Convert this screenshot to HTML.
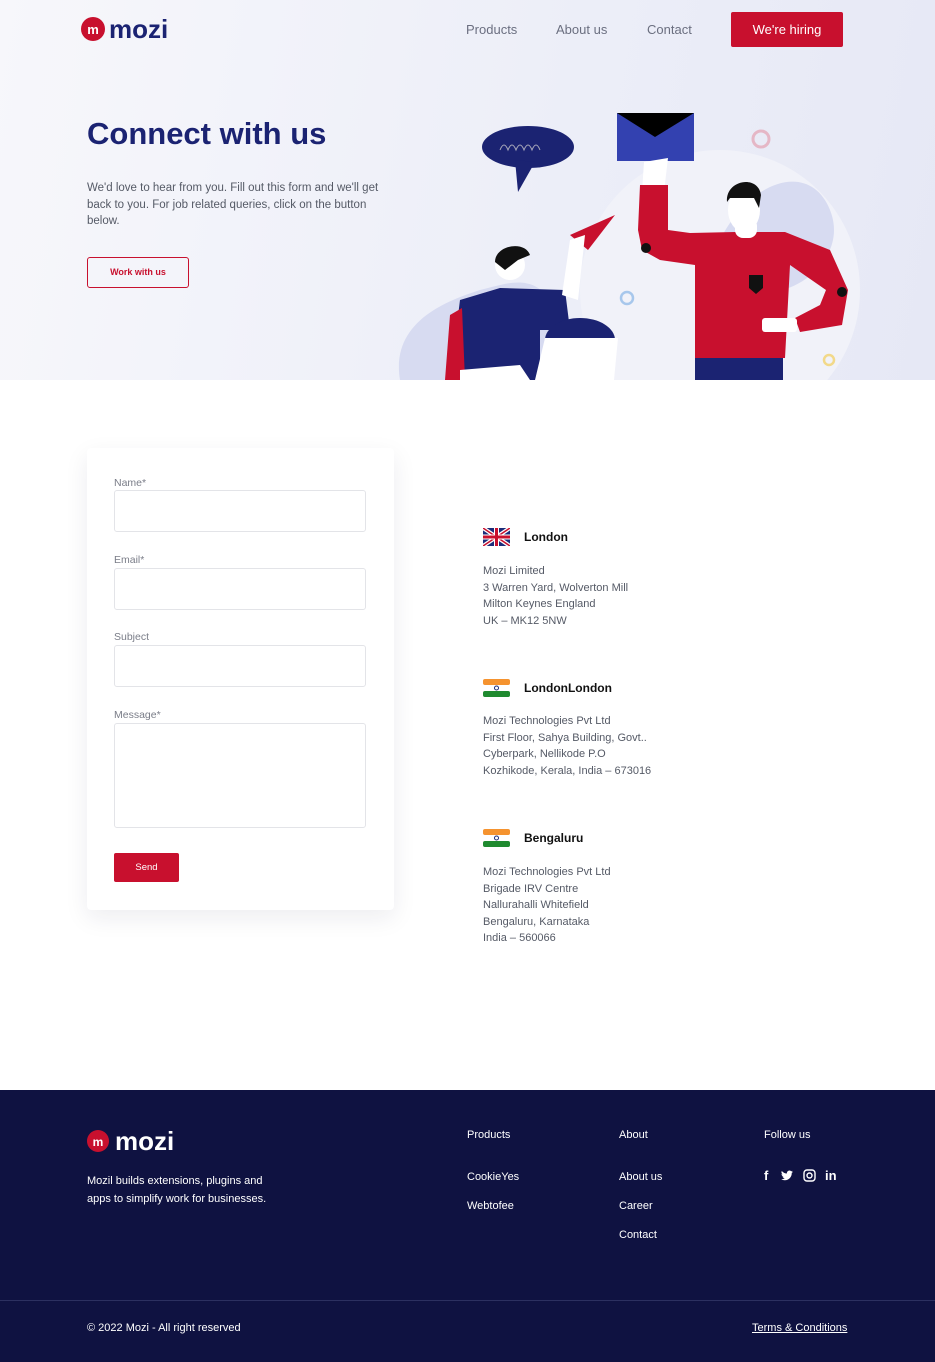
<!DOCTYPE html>
<html><head><meta charset="utf-8"><style>
*{margin:0;padding:0;box-sizing:border-box}
body{width:935px;height:1362px;font-family:"Liberation Sans",sans-serif;background:#fff;position:relative;overflow:hidden;color:#333}
.hero{position:absolute;left:0;top:0;width:935px;height:380px;background:linear-gradient(100deg,#f7f7fb 0%,#eceef8 60%,#e6e8f5 100%)}
.abs{position:absolute}
.nav a{position:absolute;top:22px;font-size:13px;color:#6b6f80;text-decoration:none}
.lbl{position:absolute;font-size:10.5px;color:#7a7d88}
.inp{position:absolute;left:114px;width:252px;border:1px solid #e3e4e8;border-radius:3px;background:#fff}
.addr{position:absolute;left:483px;font-size:11px;line-height:16.5px;color:#555a66}
.city{position:absolute;left:524px;font-size:12px;font-weight:bold;color:#111}
.foot{position:absolute;left:0;top:1090px;width:935px;height:272px;background:#0f1241;color:#fff}
.foot .t{position:absolute;font-size:11px;color:#fff}
</style></head><body>
<div class="hero">
<svg class="abs" style="left:80px;top:14px" width="100" height="30"><circle cx="13" cy="15" r="12" fill="#c8102e"/><text x="13" y="20" font-size="13" font-weight="bold" fill="#fff" text-anchor="middle" font-family="Liberation Sans">m</text><text x="29" y="24" font-size="26" font-weight="bold" fill="#1b2372" font-family="Liberation Sans">mozi</text></svg>
<div class="nav"><a style="left:466px">Products</a><a style="left:556px">About us</a><a style="left:647px">Contact</a></div>
<div class="abs" style="left:731px;top:12px;width:112px;height:35px;background:#c8102e;border-radius:2px;color:#fff;font-size:13px;text-align:center;line-height:35px">We're hiring</div>
<div class="abs" style="left:87px;top:116px;font-size:31px;font-weight:bold;color:#1b2372">Connect with us</div>
<div class="abs" style="left:87px;top:180px;width:305px;font-size:11.5px;line-height:16.5px;color:#555a66">We'd love to hear from you. Fill out this form and we'll get back to you. For job related queries, click on the button below.</div>
<div class="abs" style="left:87px;top:257px;width:102px;height:31px;border:1px solid #c8102e;border-radius:3px;color:#c8102e;font-size:9px;font-weight:bold;text-align:center;line-height:29px">Work with us</div>
<svg class="abs" style="left:390px;top:100px" width="470" height="280">
<circle cx="330" cy="190" r="140" fill="#f1f2f9"/>
<path d="M10 280 C0 220 60 200 90 190 C130 180 150 170 180 230 L220 280Z" fill="#d7dbf1"/>
<path d="M330 140 C360 80 420 60 440 110 C460 160 400 200 370 190 C340 185 320 170 330 140Z" fill="#d7dbf1"/>
<ellipse cx="138" cy="47" rx="46" ry="21" fill="#1b2372"/><path d="M125 60 L128 92 L145 62Z" fill="#1b2372"/>
<path d="M110 50 q4-10 8 0 q4-10 8 0 q4-10 8 0 q4-10 8 0 q4-10 8 0" stroke="#aab" fill="none"/>
<rect x="227" y="13" width="77" height="48" fill="#3341b0"/><path d="M227 13 L265 37 L304 13Z" fill="#000"/>
<circle cx="371" cy="39" r="8" fill="none" stroke="#e5b7c6" stroke-width="3"/>
<circle cx="237" cy="198" r="6" fill="none" stroke="#a7c7ec" stroke-width="2.5"/>
<circle cx="439" cy="260" r="5" fill="none" stroke="#f2d98a" stroke-width="2.5"/>
<path d="M180 135 L225 115 L198 150Z" fill="#c8102e"/>
<path d="M254 62 L278 58 L274 92 L252 92Z" fill="#fff"/>
<path d="M250 85 L278 85 L278 130 L300 133 L345 132 L395 132 L440 150 L458 190 L452 225 L410 232 L405 218 L430 205 L436 190 L400 165 L395 258 L305 258 L305 165 L270 160 L252 150 L248 130Z" fill="#c8102e"/>
<circle cx="256" cy="148" r="5" fill="#111"/><circle cx="452" cy="192" r="5" fill="#111"/>
<path d="M359 175 L373 175 L373 188 L366 194 L359 188Z" fill="#111"/>
<rect x="372" y="218" width="35" height="14" rx="3" fill="#fff"/>
<rect x="345" y="118" width="22" height="20" rx="8" fill="#fff"/>
<ellipse cx="354" cy="110" rx="16" ry="22" fill="#fff"/>
<path d="M337 102 C335 80 368 74 371 95 L369 108 L364 98 L340 98Z" fill="#111"/>
<rect x="305" y="258" width="88" height="22" fill="#1b2372"/>
<path d="M60 280 L70 200 L110 188 L175 190 L180 230 L150 230 L150 280Z" fill="#1b2372"/>
<path d="M55 280 L60 215 L72 208 L75 280Z" fill="#c8102e"/>
<circle cx="120" cy="165" r="15" fill="#fff"/><path d="M105 162 C105 145 135 140 140 155 L128 160 L115 170Z" fill="#111"/>
<path d="M172 195 L180 140 L195 135 L188 200Z" fill="#fff"/>
<ellipse cx="190" cy="240" rx="35" ry="22" fill="#1b2372"/>
<path d="M155 238 L228 238 L224 280 L145 280Z" fill="#fff"/>
<path d="M70 270 L130 265 L140 280 L70 280Z" fill="#fff"/>
</svg>
</div>

<div class="abs" style="left:87px;top:448px;width:307px;height:462px;background:#fff;border-radius:4px;box-shadow:0 8px 24px rgba(20,25,60,0.08)"></div>
<div class="lbl" style="left:114px;top:477px">Name*</div><div class="inp" style="top:490px;height:42px"></div>
<div class="lbl" style="left:114px;top:554px">Email*</div><div class="inp" style="top:568px;height:42px"></div>
<div class="lbl" style="left:114px;top:631px">Subject</div><div class="inp" style="top:645px;height:42px"></div>
<div class="lbl" style="left:114px;top:709px">Message*</div><div class="inp" style="top:723px;height:105px"></div>
<div class="abs" style="left:114px;top:853px;width:65px;height:29px;background:#c8102e;border-radius:2px;color:#fff;font-size:9.5px;text-align:center;line-height:29px">Send</div>

<svg class="abs" style="left:483px;top:528px" width="27" height="18"><rect width="27" height="18" fill="#1b2c7a"/><path d="M0 0L27 18M27 0L0 18" stroke="#fff" stroke-width="4"/><path d="M0 0L27 18M27 0L0 18" stroke="#c8102e" stroke-width="1.5"/><path d="M13.5 0V18M0 9H27" stroke="#fff" stroke-width="5"/><path d="M13.5 0V18M0 9H27" stroke="#c8102e" stroke-width="3"/></svg>
<div class="city" style="top:530px">London</div>
<div class="addr" style="top:563px">Mozi Limited<br>3 Warren Yard, Wolverton Mill<br>Milton Keynes England<br>UK – MK12 5NW</div>
<svg class="abs" style="left:483px;top:679px" width="27" height="18"><rect width="27" height="6" rx="2" fill="#f5932f"/><rect y="6" width="27" height="6" fill="#fff"/><rect y="12" width="27" height="6" rx="2" fill="#1f8a2f"/><circle cx="13.5" cy="9" r="2" fill="none" stroke="#1b2c7a"/></svg>
<div class="city" style="top:681px">LondonLondon</div>
<div class="addr" style="top:713px">Mozi Technologies Pvt Ltd<br>First Floor, Sahya Building, Govt..<br>Cyberpark, Nellikode P.O<br>Kozhikode, Kerala, India – 673016</div>
<svg class="abs" style="left:483px;top:829px" width="27" height="18"><rect width="27" height="6" rx="2" fill="#f5932f"/><rect y="6" width="27" height="6" fill="#fff"/><rect y="12" width="27" height="6" rx="2" fill="#1f8a2f"/><circle cx="13.5" cy="9" r="2" fill="none" stroke="#1b2c7a"/></svg>
<div class="city" style="top:831px">Bengaluru</div>
<div class="addr" style="top:864px">Mozi Technologies Pvt Ltd<br>Brigade IRV Centre<br>Nallurahalli Whitefield<br>Bengaluru, Karnataka<br>India – 560066</div>

<div class="foot">
<svg class="abs" style="left:87px;top:36px" width="100" height="30"><circle cx="11" cy="15" r="11" fill="#c8102e"/><text x="11" y="20" font-size="12" font-weight="bold" fill="#fff" text-anchor="middle" font-family="Liberation Sans">m</text><text x="28" y="24" font-size="26" font-weight="bold" fill="#fff" font-family="Liberation Sans">mozi</text></svg>
<div class="t" style="left:87px;top:82px;width:190px;line-height:18px">Mozil builds extensions, plugins and apps to simplify work for businesses.</div>
<div class="t" style="left:467px;top:39px">Products</div>
<div class="t" style="left:467px;top:81px">CookieYes</div>
<div class="t" style="left:467px;top:110px">Webtofee</div>
<div class="t" style="left:619px;top:39px">About</div>
<div class="t" style="left:619px;top:81px">About us</div>
<div class="t" style="left:619px;top:110px">Career</div>
<div class="t" style="left:619px;top:139px">Contact</div>
<div class="t" style="left:764px;top:39px">Follow us</div>
<div class="t" style="left:764px;top:78px;font-size:13px;font-weight:bold;letter-spacing:0">f</div>
<svg class="abs" style="left:781px;top:80px" width="12" height="11" viewBox="0 0 24 20"><path d="M24 2.4a10 10 0 0 1-2.8.8A5 5 0 0 0 23.3.4a10 10 0 0 1-3.1 1.2A5 5 0 0 0 11.8 6 14 14 0 0 1 1.7.9a5 5 0 0 0 1.5 6.6A5 5 0 0 1 1 6.9a5 5 0 0 0 4 4.8 5 5 0 0 1-2.200.1 5 5 0 0 0 4.6 3.4A10 10 0 0 1 0 17.3 14 14 0 0 0 7.5 19.5c9 0 14-7.5 14-14v-.6A10 10 0 0 0 24 2.4z" fill="#fff"/></svg>
<svg class="abs" style="left:803px;top:79px" width="13" height="13"><rect x="1" y="1" width="11" height="11" rx="3" fill="none" stroke="#fff" stroke-width="1.4"/><circle cx="6.5" cy="6.5" r="2.5" fill="none" stroke="#fff" stroke-width="1.4"/></svg>
<div class="t" style="left:825px;top:78px;font-size:13px;font-weight:bold">in</div>
<div class="abs" style="left:0;top:210px;width:935px;height:1px;background:#2c3060"></div>
<div class="t" style="left:87px;top:232px">© 2022 Mozi - All right reserved</div>
<div class="t" style="left:752px;top:232px;text-decoration:underline">Terms &amp; Conditions</div>
</div>
</body></html>
